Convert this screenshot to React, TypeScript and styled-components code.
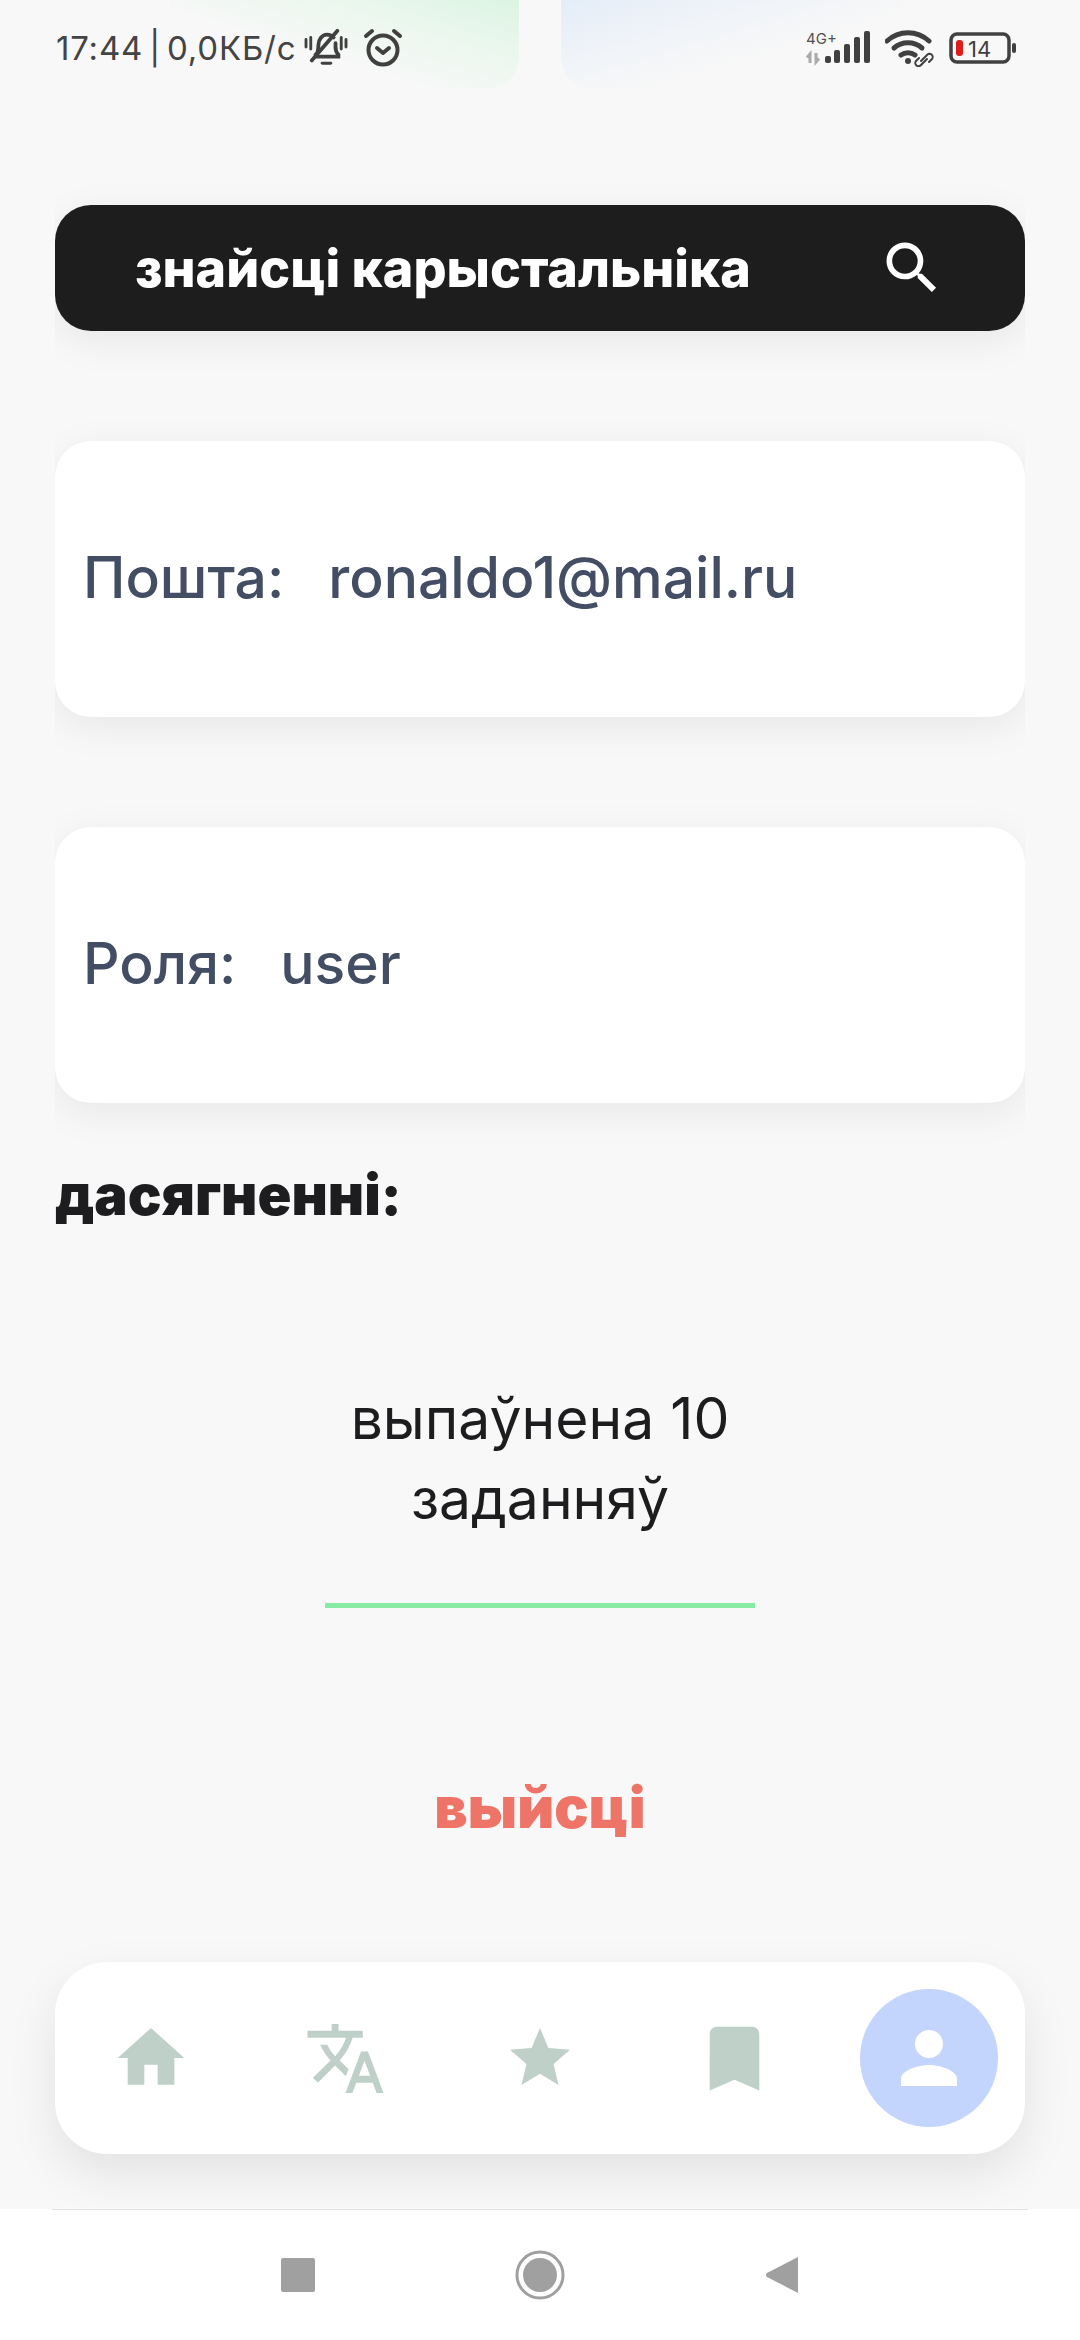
import React from "react";
import styled, { createGlobalStyle } from "styled-components";

const Global = createGlobalStyle`
  html, body { margin: 0; padding: 0; background: #f8f8f8; }
  * { box-sizing: border-box; }
`;
const FONT = `"Inter", "Noto Sans", sans-serif`;

const Page = styled.div`
  position: relative;
  width: 1080px;
  height: 2340px;
  background: #f8f8f8;
  display: flex;
  flex-direction: column;
  overflow: hidden;
  font-family: ${FONT};
`;
const Glow = styled.div<{ $side: "green" | "blue" }>`
  position: absolute;
  top: 0;
  height: 88px;
  ${(p) =>
    p.$side === "green"
      ? `left: 170px; width: 349px; border-bottom-right-radius: 30px; background: linear-gradient(197deg, #dcf4e2 0%, #ebf7ee 30%, #f8f8f8 62%);`
      : `left: 561px; width: 340px; border-bottom-left-radius: 30px; background: linear-gradient(163deg, #e4edf8 0%, #eff3f8 30%, #f8f8f8 62%);`}
`;
const StatusBar = styled.div`
  position: relative;
  height: 95px;
  flex: none;
  padding: 28px 63px 0 56px;
  display: flex;
  justify-content: space-between;
  align-items: flex-start;
  color: #404040;
`;
const StatusLeft = styled.div`
  display: flex;
  align-items: center;
  height: 40px;
`;
const StatusText = styled.span`
  font-family: "Inter", sans-serif;
  font-size: 33px;
  font-weight: 400;
  letter-spacing: 0.8px;
  word-spacing: -4px;
  color: #444;
  margin-right: 8px;
`;
const StatusRight = styled.div`
  display: flex;
  align-items: center;
  height: 40px;
  gap: 14px;
`;
const Main = styled.main`
  flex: 1;
  margin: 0 55px;
  padding-top: 110px;
  overflow-x: clip;
  min-height: 0;
`;
const SearchBar = styled.div`
  height: 126px;
  border-radius: 36px;
  background: #1d1d1d;
  color: #fff;
  display: flex;
  align-items: center;
  justify-content: space-between;
  padding: 0 79px 0 80px;
  box-shadow: 0 10px 40px rgba(0, 0, 0, 0.07);
`;
const SearchLabel = styled.span`
  font-size: 52px;
  font-weight: 800;
`;
const InfoCard = styled.div`
  height: 276px;
  margin-top: 110px;
  border-radius: 36px;
  background: #fff;
  display: flex;
  align-items: center;
  padding: 0 28px 4px;
  gap: 44px;
  font-size: 57px;
  font-weight: 500;
  color: #434d63;
  box-shadow: 0 10px 40px rgba(0, 0, 0, 0.07);
`;
const Heading = styled.h2`
  margin: 60px 0 0;
  font-size: 56px;
  line-height: 64px;
  font-weight: 900;
  color: #1d1d1f;
`;
const Achievement = styled.div`
  width: 430px;
  margin: 152px auto 0;
  padding-bottom: 64px;
  border-bottom: 5px solid #88eba3;
  text-align: center;
  font-size: 57px;
  line-height: 80px;
  color: #1d1d1f;
`;
const Logout = styled.div`
  margin-top: 165px;
  text-align: center;
  font-size: 57px;
  line-height: 70px;
  font-weight: 900;
  color: #ee7468;
`;
const NavBar = styled.nav`
  flex: none;
  height: 192px;
  margin: 0 55px 55px;
  border-radius: 52px;
  background: #fff;
  display: flex;
  align-items: center;
  justify-content: space-between;
  padding: 0 27px;
  box-shadow: 0 20px 50px rgba(0, 0, 0, 0.09);
`;
const NavItem = styled.div<{ $active?: boolean }>`
  width: 138px;
  height: 138px;
  border-radius: 50%;
  display: flex;
  align-items: center;
  justify-content: center;
  color: ${(p) => (p.$active ? "#fff" : "#bfd0c9")};
  background: ${(p) => (p.$active ? "#c3d4fd" : "transparent")};
`;
const SystemBar = styled.div`
  flex: none;
  height: 131px;
  background: #fff;
  position: relative;
  display: flex;
  align-items: center;
  justify-content: center;
  gap: 200px;
  &::before {
    content: "";
    position: absolute;
    top: 0;
    left: 52px;
    right: 52px;
    height: 1px;
    background: #e2e2e2;
  }
`;

const Mi = ({ d, size = 72 }: { d: string; size?: number }) => (
  <svg width={size} height={size} viewBox="0 0 24 24" fill="currentColor">
    <path d={d} />
  </svg>
);

export default function App() {
  return (
    <Page>
      <Global />
      <Glow $side="green" />
      <Glow $side="blue" />
      <StatusBar>
        <StatusLeft>
          <StatusText>17:44 | 0,0КБ/с</StatusText>
          <svg width="44" height="40" viewBox="0 0 46 42" fill="none" stroke="#404040" strokeWidth="4" strokeLinecap="round">
            <path d="M12 28c3-2 3-5 3-10 0-6 4-11 9-11 3 0 5 1 7 3M33 16v4c0 4 1 6 3 8v2H13" />
            <path d="M8 34 35 3" />
            <path d="M2 12v8M44 12v8M39 10v12M7 10v12" strokeWidth="3" />
            <path d="M19 37h9" strokeWidth="3" />
          </svg>
          <svg width="40" height="40" viewBox="0 0 40 40" fill="none" stroke="#404040" strokeWidth="4" strokeLinecap="round" strokeLinejoin="round" style={{ marginLeft: 15 }}>
            <circle cx="20" cy="22" r="14.5" />
            <path d="M14 20l6 5 6-5M3 8l6-5M37 8l-6-5" />
          </svg>
        </StatusLeft>
        <StatusRight>
          <svg width="66" height="38" viewBox="0 0 66 38">
            <text x="1" y="15" fontFamily="Inter, sans-serif" fontSize="15" fill="#505050">4G+</text>
            <g fill="#404040">
              <rect x="20" y="27" width="6" height="7" rx="2" />
              <rect x="29" y="21" width="6" height="13" rx="2" />
              <rect x="39" y="15" width="6" height="19" rx="2" />
              <rect x="49" y="8" width="6" height="26" rx="2" />
              <rect x="59" y="2" width="6" height="32" rx="2" />
            </g>
            <path d="M5 34v-9l-3 3.5M11 24v9l3-3.5" stroke="#aaa" strokeWidth="3" fill="none" />
          </svg>
          <svg width="50" height="38" viewBox="0 0 50 38" fill="none" stroke="#404040" strokeLinecap="round">
            <path d="M2 12c12-11 30-11 42 0" strokeWidth="5" />
            <path d="M9 19c8-7 20-7 28 0" strokeWidth="5" />
            <path d="M16 26c4-3 10-3 14 0" strokeWidth="5" />
            <circle cx="23" cy="32" r="3" fill="#404040" stroke="none" />
            <path d="M36 32l6-6a3 3 0 0 1 5 4l-3 3M42 30l-6 6a3 3 0 0 1-5-4l3-3" strokeWidth="2" />
          </svg>
          <svg width="68" height="32" viewBox="0 0 68 32">
            <rect x="2" y="2" width="58" height="28" rx="6" fill="none" stroke="#404040" strokeWidth="3.5" />
            <rect x="7" y="8" width="7" height="16" rx="3" fill="#e01b1b" />
            <text x="19" y="25" fontFamily="Inter, sans-serif" fontSize="22" fill="#404040">14</text>
            <rect x="63" y="11" width="4" height="10" rx="2" fill="#404040" />
          </svg>
        </StatusRight>
      </StatusBar>
      <Main>
        <SearchBar>
          <SearchLabel>знайсці карыстальніка</SearchLabel>
          <Mi size={68} d="M15.5 14h-.79l-.28-.27C15.41 12.59 16 11.11 16 9.5 16 5.91 13.09 3 9.5 3S3 5.91 3 9.5 5.91 16 9.5 16c1.61 0 3.09-.59 4.23-1.57l.27.28v.79l5 4.99L20.49 19l-4.99-5zm-6 0C7.01 14 5 11.99 5 9.5S7.01 5 9.5 5 14 7.01 14 9.5 11.99 14 9.5 14z" />
        </SearchBar>
        <InfoCard>
          <span>Пошта:</span>
          <span>ronaldo1@mail.ru</span>
        </InfoCard>
        <InfoCard>
          <span>Роля:</span>
          <span>user</span>
        </InfoCard>
        <Heading>дасягненні:</Heading>
        <Achievement>
          выпаўнена 10
          <br />
          заданняў
        </Achievement>
        <Logout>выйсці</Logout>
      </Main>
      <NavBar>
        <NavItem><Mi d="M10 20v-6h4v6h5v-8h3L12 3 2 12h3v8z" size={80} /></NavItem>
        <NavItem><Mi d="M12.87 15.07l-2.54-2.51.03-.03c1.74-1.94 2.98-4.17 3.71-6.53H17V4h-7V2H8v2H1v1.99h11.17C11.5 7.92 10.44 9.75 9 11.35 8.07 10.32 7.3 9.19 6.69 8h-2c.73 1.63 1.73 3.17 2.98 4.56l-5.09 5.02L4 19l5-5 3.11 3.11.76-2.04zM18.5 10h-2L12 22h2l1.12-3h4.75L21 22h2l-4.5-12zm-2.62 7l1.62-4.33L19.12 17h-3.24z" size={83} /></NavItem>
        <NavItem><Mi d="M12 17.27L18.18 21l-1.64-7.03L22 9.24l-7.19-.61L12 2 9.19 8.63 2 9.24l5.46 4.73L5.82 21z" size={72} /></NavItem>
        <NavItem><Mi d="M17 3H7c-1.1 0-1.99.9-1.99 2L5 21l7-3 7 3V5c0-1.1-.9-2-2-2z" size={85} /></NavItem>
        <NavItem $active><Mi d="M12 12c2.21 0 4-1.79 4-4s-1.79-4-4-4-4 1.79-4 4 1.79 4 4 4zm0 2c-2.67 0-8 1.34-8 4v2h16v-2c0-2.66-5.33-4-8-4z" size={84} /></NavItem>
      </NavBar>
      <SystemBar>
        <svg width="34" height="34" viewBox="0 0 34 34"><rect width="34" height="34" rx="2" fill="#a0a0a0" /></svg>
        <svg width="50" height="50" viewBox="0 0 50 50">
          <circle cx="25" cy="25" r="23" fill="none" stroke="#a0a0a0" strokeWidth="3" />
          <circle cx="25" cy="25" r="17" fill="#a0a0a0" />
        </svg>
        <svg width="34" height="38" viewBox="0 0 34 38"><path d="M33 1v36L2 21a2.5 2.5 0 0 1 0-4z" fill="#a0a0a0" /></svg>
      </SystemBar>
    </Page>
  );
}
